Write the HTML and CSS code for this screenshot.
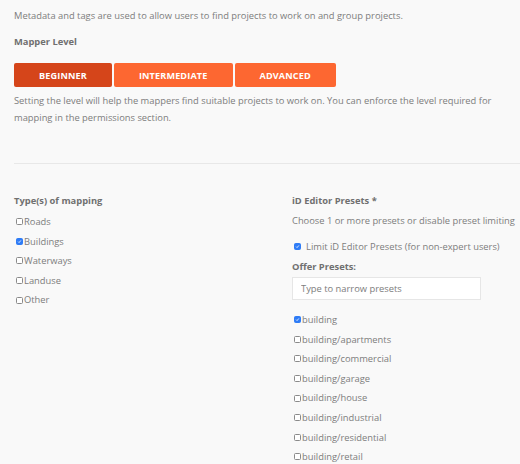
FILE: index.html
```html
<!DOCTYPE html>
<html>
<head>
<meta charset="utf-8">
<link rel="stylesheet" href="styles.css">
</head>
<body>
<div class="page">
  <p class="intro">Metadata and tags are used to allow users to find projects to work on and group projects.</p>
  <h3 class="label">Mapper Level</h3>
  <div class="levels">
    <button class="level active">BEGINNER</button>
    <button class="level">INTERMEDIATE</button>
    <button class="level">ADVANCED</button>
  </div>
  <p class="help">Setting the level will help the mappers find suitable projects to work on. You can enforce the level required for mapping in the permissions section.</p>
  <hr class="divider">
  <div class="cols">
    <div class="col">
      <h3 class="label col-title">Type(s) of mapping</h3>
      <ul class="checklist">
        <li><label><input type="checkbox">Roads</label></li>
        <li><label><input type="checkbox" checked>Buildings</label></li>
        <li><label><input type="checkbox">Waterways</label></li>
        <li><label><input type="checkbox">Landuse</label></li>
        <li><label><input type="checkbox">Other</label></li>
      </ul>
    </div>
    <div class="col right">
      <h3 class="label col-title">iD Editor Presets *</h3>
      <p class="choose">Choose 1 or more presets or disable preset limiting</p>
      <label class="limit"><input type="checkbox" checked>Limit iD Editor Presets (for non-expert users)</label>
      <h3 class="label offer">Offer Presets:</h3>
      <input class="search" type="text" placeholder="Type to narrow presets">
      <ul class="checklist presets">
        <li><label><input type="checkbox" checked>building</label></li>
        <li><label><input type="checkbox">building/apartments</label></li>
        <li><label><input type="checkbox">building/commercial</label></li>
        <li><label><input type="checkbox">building/garage</label></li>
        <li><label><input type="checkbox">building/house</label></li>
        <li><label><input type="checkbox">building/industrial</label></li>
        <li><label><input type="checkbox">building/residential</label></li>
        <li><label><input type="checkbox">building/retail</label></li>
      </ul>
    </div>
  </div>
</div>
</body>
</html>
```

FILE: styles.css
```css
* { box-sizing: border-box; }
html, body {
  margin: 0;
  padding: 0;
  background: #f9f9f9;
  overflow: hidden;
}
body {
  font-family: "Open Sans", "Liberation Sans", sans-serif;
  font-size: 9.35px;
  color: #7d7d7d;
  line-height: 17px;
}
.page {
  padding: 7px 0 0 14px;
}
p { margin: 0; }
.label {
  margin: 0;
  font-size: 9.35px;
  font-weight: 700;
  color: #707070;
}
.page > .label {
  margin-top: 9px;
}
.levels {
  display: flex;
  gap: 2px;
  margin-top: 13px;
}
.level {
  font-family: "Open Sans", "Liberation Sans", sans-serif;
  font-weight: 700;
  font-size: 9.1px;
  color: #fff;
  background: #fd6731;
  border: none;
  border-radius: 2px;
  height: 24px;
  padding: 0 25px;
  letter-spacing: 0.15px;
}
.level.active { background: #d5451a; }
.help {
  margin-top: 5px;
  padding-right: 14px;
}
.divider {
  border: none;
  border-top: 1px solid #e8e8e8;
  margin: 37px 0 0 0;
}
.cols {
  display: grid;
  grid-template-columns: 278px 1fr;
  margin-top: 28px;
}
.checklist {
  list-style: none;
  margin: 3px 0 0;
  padding: 0;
}
.checklist li {
  height: 19.6px;
  line-height: 19.6px;
}
.checklist label {
  display: flex;
  align-items: center;
}
input[type="checkbox"] {
  -webkit-appearance: none;
  appearance: none;
  width: 7px;
  height: 7px;
  margin: 0 1px 0 2px;
  border: 1px solid #8a8a8a;
  border-radius: 1.5px;
  background: #fff;
  flex: none;
}
input[type="checkbox"]:checked {
  background: #2f7cf6 url("data:image/svg+xml;utf8,<svg xmlns='http://www.w3.org/2000/svg' viewBox='0 0 8 8'><path d='M1.8 4.2 L3.3 5.7 L6.2 2.3' fill='none' stroke='white' stroke-width='1.3'/></svg>") center/100% no-repeat;
  border-color: #2f7cf6;
}
.choose {
  margin-top: 3px;
}
.limit {
  display: flex;
  align-items: center;
  margin-top: 9px;
}
.limit input[type="checkbox"] {
  margin: 0 5px 0 2px;
}
.offer {
  margin-top: 3px;
}
.search {
  display: block;
  width: 189px;
  height: 23px;
  margin: 2px 0 0 0;
  border: 1px solid #e6e6e6;
  background: #fff;
  padding: 0 8px;
  font-family: "Open Sans", "Liberation Sans", sans-serif;
  font-size: 9.35px;
  color: #7d7d7d;
  outline: none;
}
.search::placeholder { color: #7d7d7d; }
.presets { margin-top: 10px; }
```
